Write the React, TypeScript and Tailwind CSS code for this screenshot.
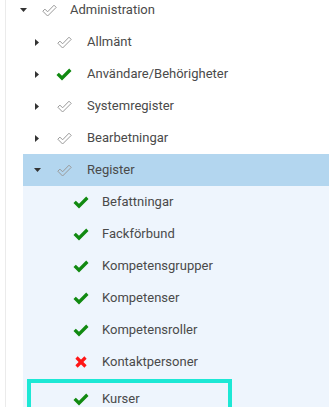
import React from "react"

type Mark = "outline" | "check" | "cross"

function CaretDown() {
  return (
    <svg width="7" height="4" viewBox="0 0 7 4">
      <polygon points="0,0 7,0 3.5,4" fill="#333" />
    </svg>
  )
}

function CaretRight() {
  return (
    <svg width="4" height="7" viewBox="0 0 4 7">
      <polygon points="0,0 4,3.5 0,7" fill="#333" />
    </svg>
  )
}

function MarkIcon({ kind }: { kind: Mark }) {
  if (kind === "outline") {
    return (
      <svg width="15" height="13" viewBox="0 0 15 13">
        <polygon
          points="0.8,7.2 2.9,5.1 5.6,7.8 12,1.2 14.2,3.4 5.6,12"
          fill="none"
          stroke="#999"
          strokeWidth="1"
          strokeLinejoin="round"
        />
      </svg>
    )
  }
  if (kind === "cross") {
    return (
      <svg width="12" height="12" viewBox="0 0 12 12">
        <line x1="1.5" y1="1.5" x2="10.5" y2="10.5" stroke="#ff1616" strokeWidth="3.2" />
        <line x1="10.5" y1="1.5" x2="1.5" y2="10.5" stroke="#ff1616" strokeWidth="3.2" />
      </svg>
    )
  }
  return (
    <svg width="16" height="13" viewBox="0 0 16 13">
      <polygon points="0.5,7 2.8,4.7 6,7.8 13.2,0.6 15.5,2.9 6,12.4" fill="#118a11" />
    </svg>
  )
}

function Row({
  pl,
  caret,
  mark,
  label,
  iconGap,
  textGap,
}: {
  pl: string
  caret?: "down" | "right"
  mark: Mark
  label: string
  iconGap: string
  textGap: string
}) {
  return (
    <div className={`flex h-[32px] items-center ${pl}`}>
      {caret && (
        <span className="flex w-[10px] justify-center">
          {caret === "down" ? <CaretDown /> : <CaretRight />}
        </span>
      )}
      <span className={`flex w-[16px] justify-center ${iconGap}`}>
        <MarkIcon kind={mark} />
      </span>
      <span className={textGap}>{label}</span>
    </div>
  )
}

const children: { mark: Mark; label: string }[] = [
  { mark: "check", label: "Befattningar" },
  { mark: "check", label: "Fackförbund" },
  { mark: "check", label: "Kompetensgrupper" },
  { mark: "check", label: "Kompetenser" },
  { mark: "check", label: "Kompetensroller" },
  { mark: "cross", label: "Kontaktpersoner" },
]

export default function App() {
  return (
    <div
      className="flex h-[407px] w-[329px] overflow-hidden bg-white text-[13px] text-[#4a4a4a]"
      style={{ fontFamily: "Roboto, 'Liberation Sans', sans-serif" }}
    >
      <div className="w-[5px] shrink-0" />
      <div className="flex-1 border-l border-[#ebebeb]">
        <div className="-mt-[6px]">
          <Row pl="pl-[12px]" caret="down" mark="outline" label="Administration" iconGap="ml-[13px]" textGap="ml-[13px]" />
          <Row pl="pl-[26px]" caret="right" mark="outline" label="Allmänt" iconGap="ml-[14px]" textGap="ml-[15px]" />
          <Row pl="pl-[26px]" caret="right" mark="check" label="Användare/Behörigheter" iconGap="ml-[14px]" textGap="ml-[15px]" />
          <Row pl="pl-[26px]" caret="right" mark="outline" label="Systemregister" iconGap="ml-[14px]" textGap="ml-[15px]" />
          <Row pl="pl-[26px]" caret="right" mark="outline" label="Bearbetningar" iconGap="ml-[14px]" textGap="ml-[15px]" />
          <div className="ml-[17px] bg-[#b3d6ef]">
            <Row pl="pl-[9px]" caret="down" mark="outline" label="Register" iconGap="ml-[14px]" textGap="ml-[15px]" />
          </div>
          <div className="ml-[17px] bg-[#eef5fd]">
            {children.map((c) => (
              <Row key={c.label} pl="pl-[50px]" mark={c.mark} label={c.label} iconGap="" textGap="ml-[13px]" />
            ))}
            <div className="ml-[4px] mt-[1px] w-[205px] border-[4px] border-[#1de8d5]">
              <Row pl="pl-[42px]" mark="check" label="Kurser" iconGap="" textGap="ml-[13px]" />
            </div>
          </div>
        </div>
      </div>
    </div>
  )
}
